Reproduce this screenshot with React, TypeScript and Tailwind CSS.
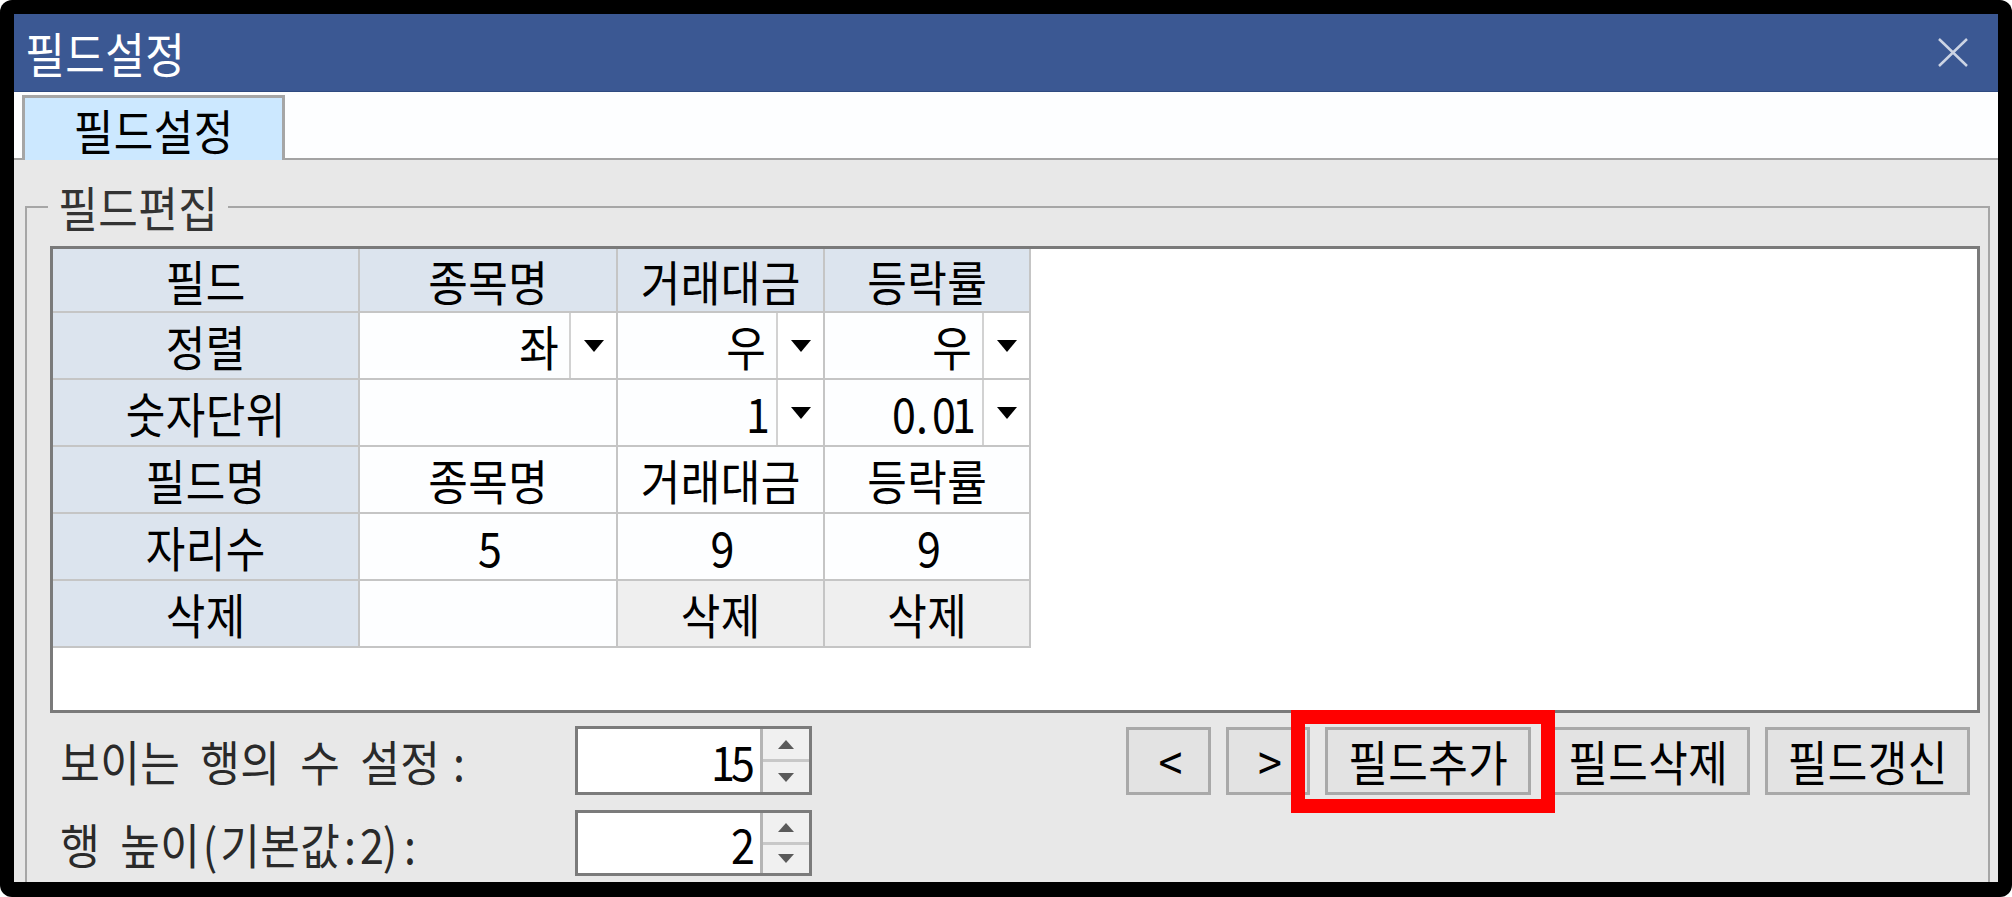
import React from "react";

const FONT = "font-['Noto_Sans_CJK_KR','Noto_Sans_CJK_SC',sans-serif]";
const TXT = "text-[43px] leading-none";
const LINE = "border-[#c5c5c5]";

/* Renders text on the fixed grid of a bitmap Korean UI font:
   Hangul syllables are full width, everything else is half width. */
function T({ s }: { s: string }) {
  return (
    <>
      {Array.from(s).map((ch, i) => {
        const wide = /[\u3131-\uD7A3]/.test(ch);
        return (
          <span
            key={i}
            className={`inline-block scale-y-[1.12] text-center ${wide ? "w-[40px]" : "w-[20px]"}`}
          >
            {ch === " " ? "\u00a0" : ch}
          </span>
        );
      })}
    </>
  );
}

function Arrow() {
  return (
    <svg width="20" height="12" viewBox="0 0 20 12">
      <path d="M0 0H20L10 12Z" fill="#000" />
    </svg>
  );
}

function SpinArrow({ up }: { up?: boolean }) {
  return (
    <svg width="16" height="9" viewBox="0 0 16 9">
      {up ? <path d="M0 9H16L8 0Z" fill="#5a5a5a" /> : <path d="M0 0H16L8 9Z" fill="#5a5a5a" />}
    </svg>
  );
}

function Cell({ w, bg, s }: { w: string; bg: string; s?: string }) {
  return (
    <div className={`${w} ${bg} box-border flex h-full items-center justify-center border-r-2 ${LINE} ${TXT} text-black`}>
      {s ? <T s={s} /> : null}
    </div>
  );
}

function DropCell({ w, value }: { w: string; value: string }) {
  return (
    <div className={`${w} box-border flex h-full border-r-2 ${LINE} bg-[#fdfeff]`}>
      <div className={`flex flex-1 items-center justify-end pr-[10px] ${TXT} text-black`}>
        <T s={value} />
      </div>
      <div className="flex w-[47px] items-center justify-center border-l-2 border-[#d2d2d2] bg-white">
        <Arrow />
      </div>
    </div>
  );
}

function Row({ h, children }: { h: string; children: React.ReactNode }) {
  return <div className={`flex ${h} border-b-2 ${LINE}`}>{children}</div>;
}

function Spinner({ value, h }: { value: string; h: string }) {
  return (
    <div className={`flex w-[237px] ${h} box-border border-[3px] border-[#7b7b7b] bg-white`}>
      <div className={`flex flex-1 items-center justify-end pr-[9px] ${TXT} text-black`}>
        <T s={value} />
      </div>
      <div className="flex w-[49px] flex-col border-l-[3px] border-[#b5b5b5]">
        <div className="flex flex-1 items-center justify-center border-b-[3px] border-[#c8c8c8] bg-[#f0f0f0]">
          <SpinArrow up />
        </div>
        <div className="flex flex-1 items-center justify-center bg-[#f0f0f0]">
          <SpinArrow />
        </div>
      </div>
    </div>
  );
}

function Btn({ w, s }: { w: string; s: string }) {
  return (
    <div
      className={`${w} box-border flex h-[68px] items-center justify-center border-[3px] border-[#a9a9a9] bg-[#e3e3e3] ${TXT} text-black`}
    >
      <T s={s} />
    </div>
  );
}

export default function App() {
  const c1 = "w-[307px]";
  const c2 = "w-[258px]";
  const c3 = "w-[207px]";
  const c4 = "w-[206px]";
  const head = "bg-[#dce4ee]";
  const white = "bg-[#fdfeff]";
  const gray = "bg-[#efefef]";

  return (
    <div className={`relative h-[897px] w-[2012px] overflow-hidden rounded-[12px] bg-black pl-[14px] pt-[14px] ${FONT}`}>
      <div className="flex h-[868px] w-[1984px] flex-col overflow-hidden">
        {/* Title bar */}
        <div className="flex h-[78px] shrink-0 items-center justify-between border-b border-[#2f4a80] bg-[#3b5893] pl-[11px] pr-[30px]">
          <span className={`${TXT} text-white`}>
            <T s="필드설정" />
          </span>
          <svg width="30" height="29" viewBox="0 0 30 29">
            <path d="M1 1L29 28M29 1L1 28" stroke="#ccd4e4" strokeWidth="2.5" />
          </svg>
        </div>

        {/* Tab strip */}
        <div className="flex h-[68px] shrink-0 items-end border-b-2 border-[#a3a3a3] bg-[#fdfeff] pl-[8px]">
          <div
            className={`relative z-10 -mb-[2px] flex h-[65px] w-[263px] items-center justify-center border-[3px] border-b-0 border-[#a6a6a6] bg-[#cce8ff] ${TXT} text-black`}
          >
            <T s="필드설정" />
          </div>
        </div>

        {/* Body */}
        <div className="flex-1 overflow-hidden bg-[#e8e8e8] pl-[11px] pr-[8px] pt-[25px]">
          <fieldset className="border-2 border-[#a6a6a6] pb-[30px]">
            <legend className={`ml-[21px] px-[10px] ${TXT} leading-[44px] text-[#333]`}>
              <T s="필드편집" />
            </legend>

            {/* Grid */}
            <div className="ml-[23px] mr-[8px] mt-[18px] box-border h-[467px] border-[3px] border-[#7a7a7a] bg-white">
              <div className="w-[978px]">
                <Row h="h-[64px]">
                  <Cell w={c1} bg={head} s="필드" />
                  <Cell w={c2} bg={head} s="종목명" />
                  <Cell w={c3} bg={head} s="거래대금" />
                  <Cell w={c4} bg={head} s="등락률" />
                </Row>
                <Row h="h-[67px]">
                  <Cell w={c1} bg={head} s="정렬" />
                  <DropCell w={c2} value="좌" />
                  <DropCell w={c3} value="우" />
                  <DropCell w={c4} value="우" />
                </Row>
                <Row h="h-[67px]">
                  <Cell w={c1} bg={head} s="숫자단위" />
                  <Cell w={c2} bg={white} />
                  <DropCell w={c3} value="1" />
                  <DropCell w={c4} value="0.01" />
                </Row>
                <Row h="h-[67px]">
                  <Cell w={c1} bg={head} s="필드명" />
                  <Cell w={c2} bg={white} s="종목명" />
                  <Cell w={c3} bg={white} s="거래대금" />
                  <Cell w={c4} bg={white} s="등락률" />
                </Row>
                <Row h="h-[67px]">
                  <Cell w={c1} bg={head} s="자리수" />
                  <Cell w={c2} bg={white} s="5" />
                  <Cell w={c3} bg={white} s="9" />
                  <Cell w={c4} bg={white} s="9" />
                </Row>
                <Row h="h-[67px]">
                  <Cell w={c1} bg={head} s="삭제" />
                  <Cell w={c2} bg={white} />
                  <Cell w={c3} bg={gray} s="삭제" />
                  <Cell w={c4} bg={gray} s="삭제" />
                </Row>
              </div>
            </div>

            {/* Bottom controls */}
            <div className="flex flex-col pl-[33px] pr-[18px]">
              <div className="mt-[13px] flex items-center">
                <div className={`w-[515px] ${TXT} text-[#2a2a2a]`}>
                  <T s="보이는 행의 수 설정" />
                  <span className="ml-[9px]">
                    <T s=":" />
                  </span>
                </div>
                <Spinner value="15" h="h-[69px]" />
                <div className="ml-auto flex items-center gap-[15px]">
                  <Btn w="w-[85px]" s="<" />
                  <Btn w="w-[84px]" s=">" />
                  <Btn w="w-[206px]" s="필드추가" />
                  <Btn w="w-[204px]" s="필드삭제" />
                  <Btn w="w-[205px]" s="필드갱신" />
                </div>
              </div>
              <div className="mt-[15px] flex items-center">
                <div className={`w-[515px] ${TXT} text-[#2a2a2a]`}>
                  <T s="행 높이(기본값:2):" />
                </div>
                <Spinner value="2" h="h-[66px]" />
              </div>
            </div>
          </fieldset>
        </div>
      </div>

      {/* Red annotation box */}
      <div className="absolute left-[1291px] top-[710px] h-[103px] w-[264px] border-[14px] border-[#ff0000]" />
    </div>
  );
}
